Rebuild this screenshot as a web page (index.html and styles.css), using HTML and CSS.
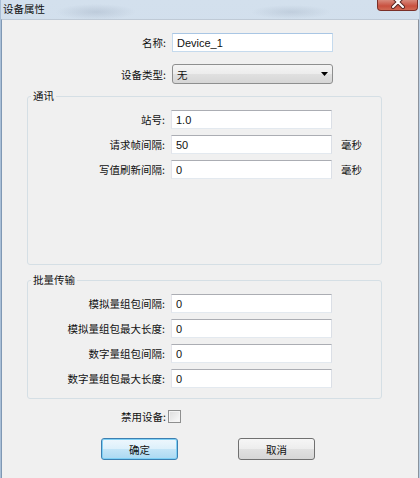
FILE: index.html
```html
<!DOCTYPE html>
<html lang="zh-CN">
<head>
    <meta charset="UTF-8">
    <title>设备属性</title>
    <link rel="stylesheet" href="styles.css">
</head>
<body>
    <div class="window">
        <div class="titlebar">
            <span class="title">设备属性</span>
            <div class="close-btn">
                <svg width="14" height="9" viewBox="0 0 14 9">
                    <path d="M2 -3 L12 7 M12 -3 L2 7" stroke="#5a2a26" stroke-width="4" stroke-linecap="round"/>
                    <path d="M2 -3 L12 7 M12 -3 L2 7" stroke="#ffffff" stroke-width="2" stroke-linecap="round"/>
                </svg>
            </div>
        </div>

        <div class="client">
            <div class="form-grid top-grid">
                <label>名称:</label>
                <input class="field focused" type="text" value="Device_1">
                <span></span>

                <label>设备类型:</label>
                <div class="combo">
                    <span>无</span>
                    <svg width="7" height="4" viewBox="0 0 7 4"><path d="M0 0 H7 L3.5 4 Z" fill="#000"/></svg>
                </div>
                <span></span>
            </div>

            <div class="group comm">
                <div class="group-title">通讯</div>
                <div class="form-grid group-grid">
                    <label>站号:</label>
                    <input class="field" type="text" value="1.0">
                    <span></span>

                    <label>请求帧间隔:</label>
                    <input class="field" type="text" value="50">
                    <span class="unit">毫秒</span>

                    <label>写值刷新间隔:</label>
                    <input class="field" type="text" value="0">
                    <span class="unit">毫秒</span>
                </div>
            </div>

            <div class="group batch">
                <div class="group-title">批量传输</div>
                <div class="form-grid group-grid">
                    <label>模拟量组包间隔:</label>
                    <input class="field" type="text" value="0">
                    <span></span>

                    <label>模拟量组包最大长度:</label>
                    <input class="field" type="text" value="0">
                    <span></span>

                    <label>数字量组包间隔:</label>
                    <input class="field" type="text" value="0">
                    <span></span>

                    <label>数字量组包最大长度:</label>
                    <input class="field" type="text" value="0">
                    <span></span>
                </div>
            </div>

            <div class="disable-row">
                <label for="disableDevice">禁用设备:</label>
                <input id="disableDevice" class="check" type="checkbox">
            </div>

            <div class="buttons">
                <button class="btn default">确定</button>
                <button class="btn">取消</button>
            </div>
        </div>
    </div>
</body>
</html>
```

FILE: styles.css
```css
body {
    margin: 0;
    padding: 0;
    width: 420px;
    height: 478px;
    overflow: hidden;
    font-family: "Noto Sans CJK SC", "Liberation Sans", sans-serif;
    font-size: 10.5px;
    color: #111;
    background: #c9d9ea;
}
.window {
    width: 420px;
    height: 478px;
    display: flex;
    flex-direction: column;
    box-sizing: border-box;
    border-left: 1px solid #a9bfd7;
    border-right: 1px solid #b9cde2;
    background:
        radial-gradient(ellipse 40px 8px at 95px 12px, rgba(150, 165, 185, 0.35), transparent),
        radial-gradient(ellipse 40px 7px at 290px 12px, rgba(150, 165, 185, 0.3), transparent),
        linear-gradient(to bottom, #d3e0ed, #c3d4e6);
}
.titlebar {
    height: 19px;
    display: flex;
    justify-content: space-between;
    align-items: flex-start;
    flex-shrink: 0;
}
.title {
    margin: 1px 0 0 2px;
    line-height: 15px;
    font-size: 10.5px;
    color: #111;
}
.close-btn {
    width: 41px;
    height: 11px;
    margin-right: 1px;
    box-sizing: border-box;
    border: 1px solid #7a2f27;
    border-top: none;
    border-radius: 0 0 4px 4px;
    background: linear-gradient(to bottom, #d88a7c, #c9503f 60%, #d06a55);
    display: flex;
    justify-content: center;
    align-items: flex-start;
}
.client {
    flex: 1;
    border-top: 1px solid #bfcad6;
    border-left: 1px solid #7f98b4;
    border-right: 1px solid #8a929c;
    background: #f0f0f0;
    padding-top: 13px;
}
.form-grid {
    display: grid;
    grid-template-columns: 164px 161px auto;
    column-gap: 6px;
    align-items: center;
}
.top-grid {
    row-gap: 12px;
}
.group-grid {
    grid-template-columns: 137px 161px auto;
    row-gap: 6px;
    margin-top: 8px;
}
.form-grid label {
    text-align: right;
    white-space: nowrap;
}
.field {
    height: 19px;
    box-sizing: border-box;
    margin: 0;
    padding: 0 0 0 4px;
    border: 1px solid;
    border-color: #abadb3 #dbdfe6 #e3e9ef #e2e3ea;
    background: #fff;
    font-family: "Liberation Sans", Arial, sans-serif;
    font-size: 11px;
    color: #111;
    outline: none;
}
.field.focused {
    border-color: #a9c6e4 #c5daed #c5daed #c5daed;
}
.combo {
    height: 20px;
    box-sizing: border-box;
    border: 1px solid #8e8f8f;
    border-radius: 3px;
    background: linear-gradient(to bottom, #f4f4f4, #ececec 50%, #e0e0e0 50%, #d6d6d6);
    display: flex;
    justify-content: space-between;
    align-items: center;
    padding: 0 4px 0 4px;
}
.unit {
    margin-left: 3px;
    white-space: nowrap;
}
.group {
    margin: 12px 36px 0 25px;
    border: 1px solid #d5dfe5;
    border-radius: 3px;
}
.group.comm {
    padding-bottom: 85px;
}
.group.batch {
    margin-top: 15px;
    padding-bottom: 10px;
}
.group-title {
    display: table;
    margin: -7px 0 0 3px;
    padding: 0 2px;
    line-height: 12px;
    background: #f0f0f0;
}
.disable-row {
    display: flex;
    align-items: center;
    margin-top: 11px;
    height: 13px;
}
.disable-row label {
    width: 164px;
    text-align: right;
}
.check {
    appearance: none;
    -webkit-appearance: none;
    width: 13px;
    height: 13px;
    margin: 0 0 0 2px;
    box-sizing: border-box;
    border: 1px solid #8e8f8f;
    background: linear-gradient(135deg, #dcdcdc, #fbfbfb);
    box-shadow: inset 0 0 0 1px #f4f4f4;
}
.buttons {
    display: flex;
    justify-content: center;
    gap: 60px;
    margin-top: 15px;
    padding-right: 4px;
}
.btn {
    width: 77px;
    height: 22px;
    box-sizing: border-box;
    border: 1px solid #707070;
    border-radius: 3px;
    background: linear-gradient(to bottom, #f6f6f6, #ededed 50%, #e1e1e1 50%, #d6d6d6);
    font-family: "Noto Sans CJK SC", sans-serif;
    font-size: 10.5px;
    color: #111;
    padding: 0;
    cursor: pointer;
}
.btn.default {
    border-color: #3c7fb1;
    background: linear-gradient(to bottom, #eef7fd, #dcf0fb 50%, #c4e5f7 50%, #abd9f2);
    box-shadow: inset 0 0 0 1px #7fd0f5;
}
```
